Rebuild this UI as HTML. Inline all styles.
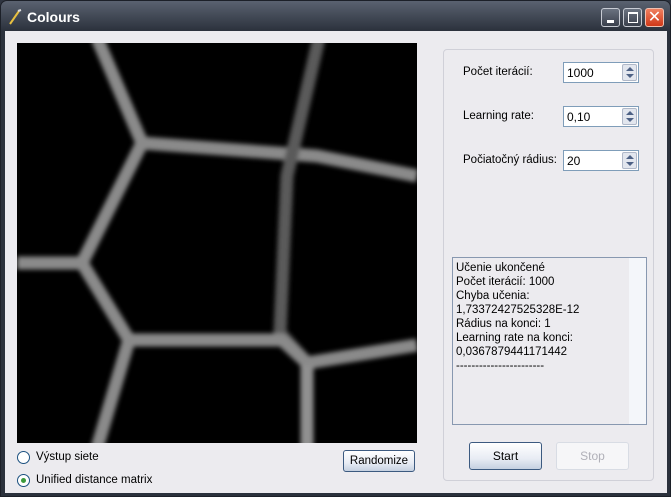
<!DOCTYPE html>
<html><head><style>
*{margin:0;padding:0;box-sizing:border-box}
body{width:671px;height:497px;overflow:hidden;background:#2e3440;font-family:"Liberation Sans",sans-serif;font-size:12px;color:#000;position:relative}
.win{position:absolute;left:0;top:0;width:671px;height:497px;background:linear-gradient(#5a6270,#2b313c 30px);border-radius:7px 7px 0 0;border:1px solid #1c2028}
.title{position:absolute;left:26px;top:8px;color:#fff;font-size:14px;font-weight:bold}
.client{position:absolute;left:4px;top:30px;width:662px;height:462px;background:#ecebef}
.tb{position:absolute;top:7px;width:19px;height:19px;border-radius:3px;border:1px solid #c8ccd4;background:linear-gradient(#6a7280,#3a404c)}
.abs{position:absolute}
.lbl{position:absolute;font-size:11.5px}
.inp{position:absolute;width:76px;height:21px;background:#fff;border:1px solid #7f9db9;padding:3px 0 0 3px;font-size:12px}
.spin{position:absolute;right:1px;top:1px;width:15px;height:17px;border:1px solid #b0b8c8;background:#e2e6ee;border-radius:2px}
.spin:before{content:"";position:absolute;left:3px;top:2px;border:4px solid transparent;border-bottom:4px solid #4d6185;border-top:0}
.spin:after{content:"";position:absolute;left:3px;top:9px;border:4px solid transparent;border-top:4px solid #4d6185;border-bottom:0}
.btn{position:absolute;border:1px solid #3c5a80;border-radius:3px;background:linear-gradient(#fff,#e8ecf4 60%,#c5d0e0);text-align:center;font-size:12px}
.radio{position:absolute;width:13px;height:13px;border-radius:50%;border:1px solid #1c5180;background:#fff}
</style></head><body>
<div class="win">
<svg class="abs" style="left:6px;top:7px" width="16" height="18"><line x1="3" y1="16" x2="12" y2="3" stroke="#e8c040" stroke-width="2"/><line x1="11" y1="3" x2="14" y2="2" stroke="#ddd" stroke-width="2"/></svg>
<div class="title">Colours</div>
<div class="tb" style="left:600px"><div class="abs" style="left:5px;top:11px;width:7px;height:3px;background:#fff"></div></div>
<div class="tb" style="left:622px"><div class="abs" style="left:4px;top:3px;width:10px;height:11px;border:1px solid #fff;border-top-width:2px"></div></div>
<div class="tb" style="left:644px;background:linear-gradient(#f08060,#d03818);border-color:#f0c0b0;color:#fff;font-size:16px;text-align:center;line-height:17px">✕</div>
<div class="client"></div>
<svg class="abs" style="left:16px;top:42px" width="400" height="400">
<defs><filter id="b"><feGaussianBlur stdDeviation="2.5"/></filter></defs>
<rect width="400" height="400" fill="#000"/>
<g stroke="#8a8a8a" stroke-width="13" fill="none" filter="url(#b)" stroke-linejoin="round">
<polyline points="80,-5 125,100 65,220 112,297 80,405"/>
<polyline points="125,100 300,113 400,133"/>
<polyline points="302,-5 270,133 263,290 290,320 290,405" stroke="#5a5a5a"/>
<line x1="0" y1="220" x2="65" y2="220"/>
<polyline points="112,297 265,297 290,320 400,302"/>
<line x1="290" y1="322" x2="290" y2="405" stroke="#909090"/>
</g></svg>
<div class="radio" style="left:16px;top:450px"></div>
<div class="lbl" style="left:35px;top:450px">Výstup siete</div>
<div class="radio" style="left:16px;top:473px"><div class="abs" style="left:3px;top:3px;width:5px;height:5px;border-radius:50%;background:#3c9a3c"></div></div>
<div class="lbl" style="left:35px;top:473px">Unified distance matrix</div>
<div class="btn" style="left:342px;top:449px;width:72px;height:22px;line-height:20px;font-size:11.5px">Randomize</div>
<div class="abs" style="left:442px;top:48px;width:211px;height:432px;border:1px solid #d0d0d8;border-radius:4px"></div>
<div class="lbl" style="left:462px;top:65px">Počet iterácií:</div>
<div class="inp" style="left:562px;top:61px">1000<div class="spin"></div></div>
<div class="lbl" style="left:462px;top:109px">Learning rate:</div>
<div class="inp" style="left:562px;top:105px">0,10<div class="spin"></div></div>
<div class="lbl" style="left:462px;top:153px">Počiatočný rádius:</div>
<div class="inp" style="left:562px;top:149px">20<div class="spin"></div></div>
<div class="abs" style="left:451px;top:256px;width:195px;height:168px;border:1px solid #8898b0;background:#ecebef;padding:3px 0 0 3px;line-height:14px;font-size:11.5px">Učenie ukončené<br>Počet iterácií: 1000<br>Chyba učenia:<br>1,73372427525328E-12<br>Rádius na konci: 1<br>Learning rate na konci:<br>0,0367879441171442<br>-----------------------
<div class="abs" style="right:0;top:0;width:17px;height:166px;background:#f4f6fa"></div></div>
<div class="btn" style="left:468px;top:441px;width:73px;height:28px;line-height:26px">Start</div>
<div class="btn" style="left:555px;top:441px;width:73px;height:28px;line-height:26px;border-color:#d8dce4;background:#f6f6f8;color:#b0b0b8">Stop</div>
</div>
</body></html>
